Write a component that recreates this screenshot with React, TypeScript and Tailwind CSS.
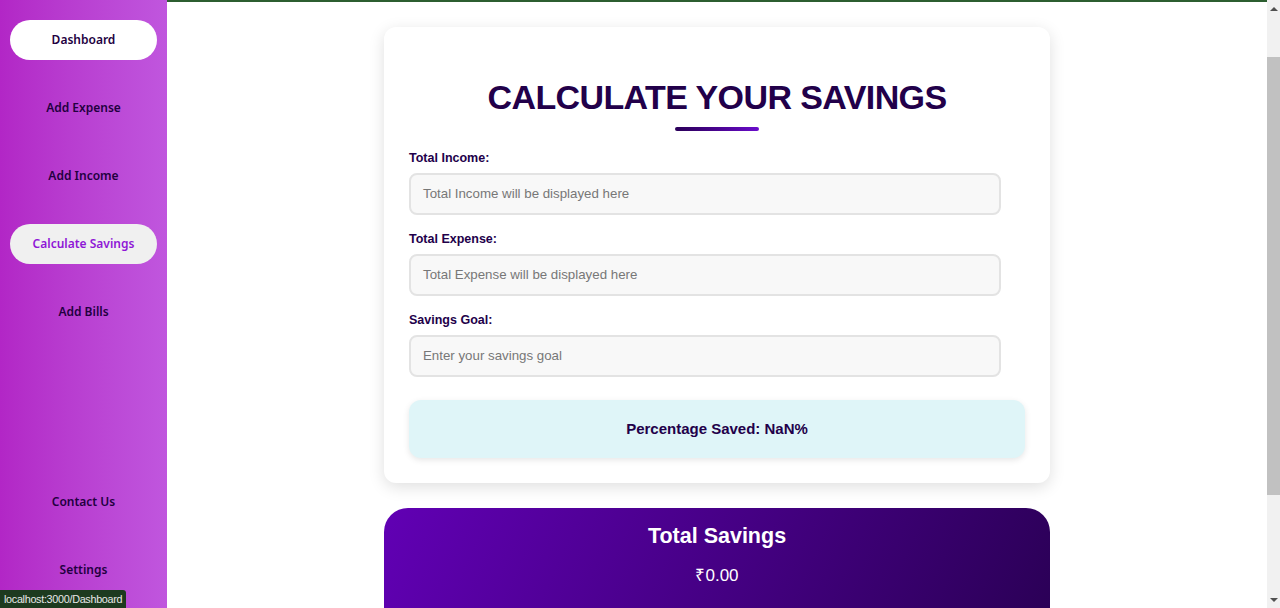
const navTop = ["Dashboard", "Add Expense", "Add Income", "Calculate Savings", "Add Bills"];
const navBottom = ["Contact Us", "Settings"];

const fields = [
  { label: "Total Income:", ph: "Total Income will be displayed here" },
  { label: "Total Expense:", ph: "Total Expense will be displayed here" },
  { label: "Savings Goal:", ph: "Enter your savings goal" },
];

function NavItem({ name }: { name: string }) {
  const base = "mx-[10px] h-[40px] rounded-full flex items-center justify-center text-[12px] font-semibold";
  if (name === "Dashboard") return <div className={`${base} bg-white text-[#22003f]`}>{name}</div>;
  if (name === "Calculate Savings") return <div className={`${base} bg-[#f0f0f0] text-[#8f17d6]`}>{name}</div>;
  return <div className={`${base} text-[#22003f]`}>{name}</div>;
}

export default function App() {
  return (
    <div className="relative flex h-[608px] w-[1280px] overflow-hidden bg-white font-['Liberation_Sans',Arial,sans-serif]">
      <aside className="flex w-[167px] shrink-0 flex-col justify-between bg-gradient-to-r from-[#b226c6] to-[#c056de] pt-[20px] pb-[18px] font-['Noto_Sans',sans-serif]">
        <nav className="flex flex-col gap-[28px]">
          {navTop.map((n) => (
            <NavItem key={n} name={n} />
          ))}
        </nav>
        <nav className="flex flex-col gap-[28px]">
          {navBottom.map((n) => (
            <NavItem key={n} name={n} />
          ))}
        </nav>
      </aside>

      <main className="flex flex-1 flex-col items-center border-t-2 border-[#2c5e30] pt-[25px]">
        <section className="w-[666px] rounded-[12px] bg-white px-[25px] pt-[50px] pb-[25px] shadow-[0_4px_16px_rgba(0,0,0,0.13)]">
          <h1 className="text-center text-[34px] leading-[40px] font-bold tracking-[-0.6px] text-[#22004a]">
            CALCULATE YOUR SAVINGS
          </h1>
          <div className="mx-auto mt-[10px] h-[4px] w-[84px] rounded-full bg-gradient-to-r from-[#2a0058] to-[#6a0dcc]" />
          <div className="mt-[19px] flex flex-col gap-[16px]">
            {fields.map((f) => (
              <div key={f.label}>
                <div className="mb-[7px] text-[12.5px] leading-[16px] font-bold text-[#22004a]">{f.label}</div>
                <div className="flex h-[42px] w-[592px] items-center rounded-[8px] border-2 border-[#e3e3e3] bg-[#f8f8f8] px-[12px] text-[13.3px] text-[#777]">
                  {f.ph}
                </div>
              </div>
            ))}
          </div>
          <div className="mt-[23px] flex h-[58px] items-center justify-center rounded-[12px] bg-[#dff5f8] text-[15px] font-bold text-[#22004a] shadow-[0_2px_6px_rgba(0,0,0,0.1)]">
            Percentage Saved: NaN%
          </div>
        </section>

        <section className="mt-[25px] flex h-[130px] w-[666px] shrink-0 flex-col items-center rounded-[24px] bg-[linear-gradient(115deg,#6100b4,#2a0055)] pt-[14px] text-white">
          <h2 className="text-[21.5px] leading-[28px] font-bold">Total Savings</h2>
          <div className="mt-[15px] text-[17px] leading-[22px]">₹0.00</div>
        </section>
      </main>

      <div className="flex w-[13px] shrink-0 flex-col items-center bg-[#f1f1f1]">
        <div className="mt-[7px] h-0 w-0 border-x-[4px] border-b-[4px] border-x-transparent border-b-[#505050]" />
        <div className="mt-[46px] h-[438px] w-full bg-[#c1c1c1]" />
        <div className="mt-auto mb-[6px] h-0 w-0 border-x-[4px] border-t-[4px] border-x-transparent border-t-[#505050]" />
      </div>

      <div className="absolute bottom-0 left-0 flex h-[18px] items-center rounded-tr-[3px] bg-[#1d3a1f] px-[4px] text-[10.8px] tracking-[-0.3px] text-[#e8e8e8]">
        localhost:3000/Dashboard
      </div>
    </div>
  );
}
